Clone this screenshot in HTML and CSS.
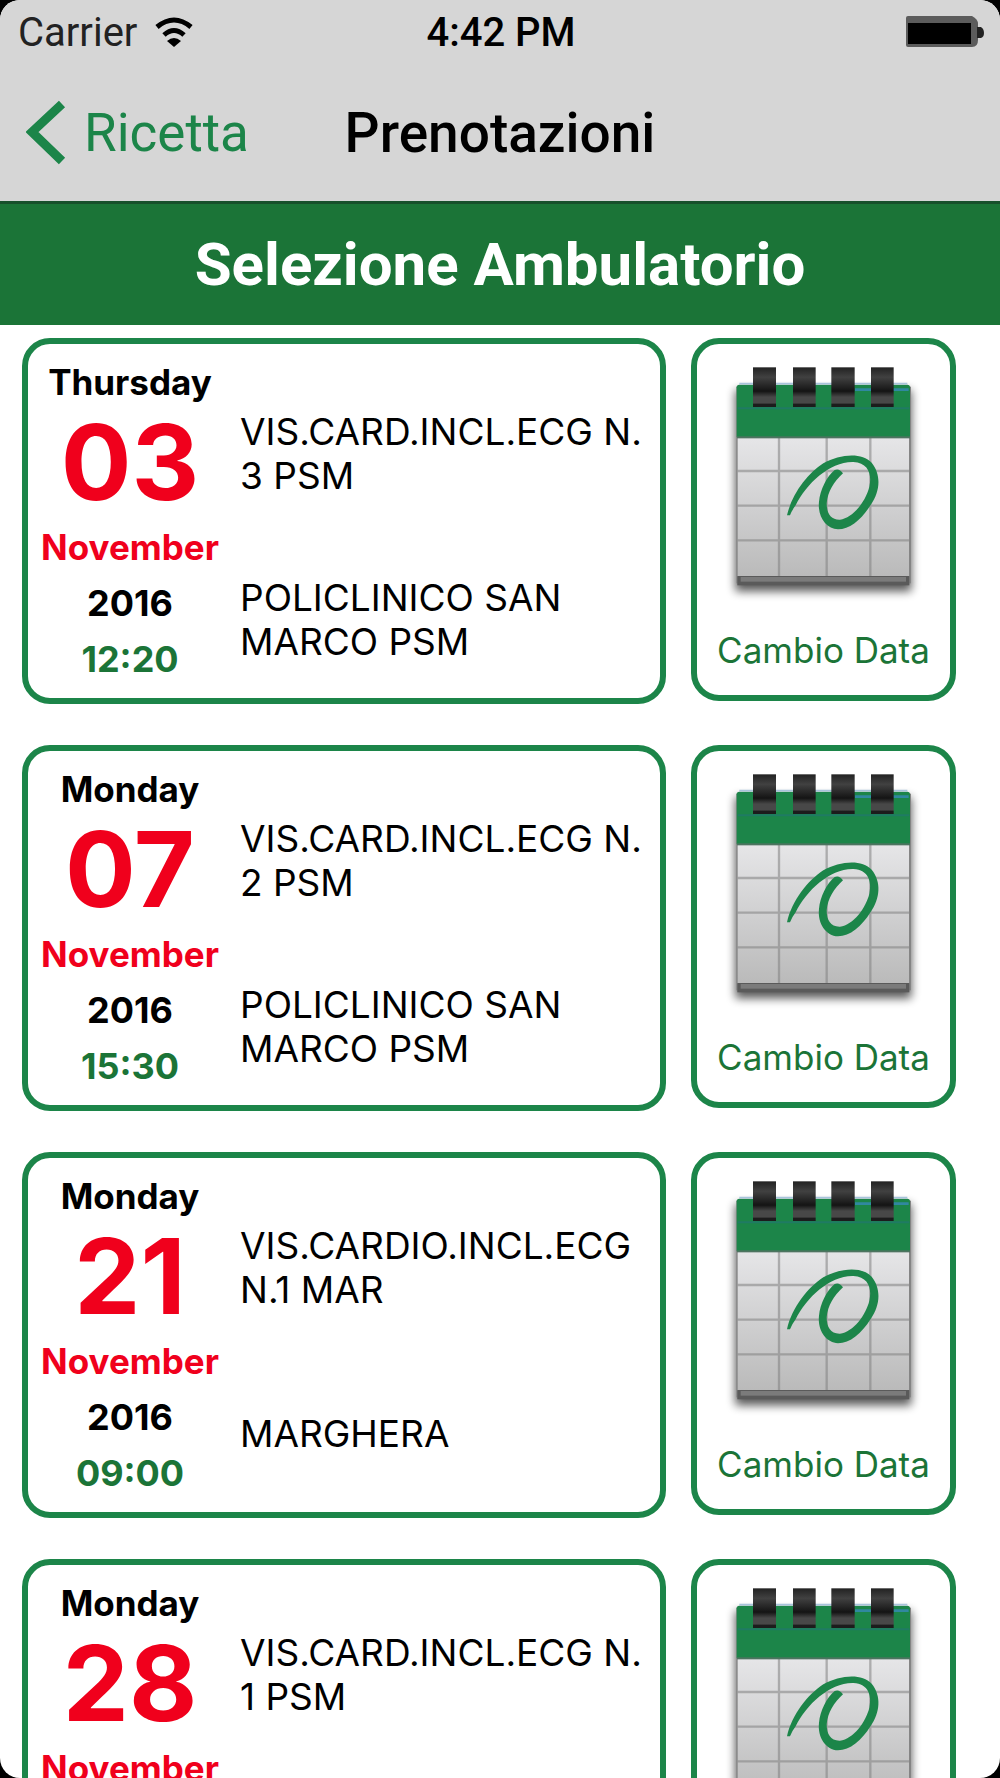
FILE: index.html
```html
<!DOCTYPE html>
<html lang="it">
<head>
    <meta charset="UTF-8">
    <meta name="viewport" content="width=device-width, initial-scale=1.0">
    <title>Prenotazioni</title>
    <link rel="stylesheet" href="styles.css">
</head>
<body>
    <!-- Shared calendar icon -->
    <svg class="sprite" aria-hidden="true">
        <defs>
            <linearGradient id="paper" x1="0" y1="0" x2="0" y2="1">
                <stop offset="0" stop-color="#e6e6e8"/>
                <stop offset="1" stop-color="#bababa"/>
            </linearGradient>
            <linearGradient id="ring" x1="0" y1="0" x2="0" y2="1">
                <stop offset="0" stop-color="#222222"/>
                <stop offset="0.25" stop-color="#414141"/>
                <stop offset="0.6" stop-color="#141414"/>
                <stop offset="0.75" stop-color="#484848"/>
                <stop offset="0.9" stop-color="#484848"/>
                <stop offset="0.93" stop-color="#1c1c1c"/>
                <stop offset="1" stop-color="#1c1c1c"/>
            </linearGradient>
            <filter id="shadow" x="-20%" y="-20%" width="140%" height="140%">
                <feGaussianBlur stdDeviation="14"/>
            </filter>
        </defs>
        <symbol id="calendar" viewBox="132 126 600 735">
            <rect x="166" y="210" width="528" height="604" fill="#000000" opacity="0.65" filter="url(#shadow)"/>
            <rect x="169" y="200" width="524" height="590" fill="#858585"/>
            <rect x="173" y="350" width="514" height="420" fill="url(#paper)"/>
            <path d="M297 350v420M440 350v420M571 350v420M173 453h514M173 557h514M173 661h514" stroke="#808080" stroke-opacity="0.55" stroke-width="7" fill="none"/>
            <path d="M170 352V202q0-8 8-8H682q8 0 8 8V352z" fill="#1c8549"/>
            <path d="M178 191H682" stroke="#a9c3dc" stroke-width="5"/>
            <path d="M525 209H686" stroke="#3088a0" stroke-width="8"/>
            <path d="M173 265H688" stroke="#1f7b63" stroke-width="6"/>
            <rect x="171" y="349" width="519" height="6" fill="#4d7460"/>
            <rect x="172" y="768" width="516" height="28" fill="#5a5a5a"/>
            <rect x="182" y="771" width="496" height="14" fill="#7b7b7b"/>
            <rect x="219" y="142" width="69" height="119" fill="url(#ring)"/>
            <rect x="339" y="142" width="68" height="119" fill="url(#ring)"/>
            <rect x="454" y="142" width="70" height="119" fill="url(#ring)"/>
            <rect x="573" y="142" width="68" height="119" fill="url(#ring)"/>
            <path d="M321 586C336 520 384 460 430 430C480 402 545 396 575 428C605 465 600 515 572 555C545 598 510 628 474 628C438 626 412 590 417 545C420 510 440 470 464 450Q478 444 489 460C462 485 443 515 440 550C440 580 452 600 480 599C520 594 558 542 568 500C576 465 566 428 520 426C450 424 380 490 347 556Q335 572 330 586z" fill="#1c8549"/>
        </symbol>
    </svg>

    <div class="screen">
        <header class="top-bar">
            <div class="status-bar">
                <div class="carrier">
                    <span>Carrier</span>
                    <svg class="wifi-icon" viewBox="0 0 38 30" aria-hidden="true">
                        <path d="M2 10Q19 -4 36 10M9 18Q19 9 29 18" fill="none" stroke="#000000" stroke-width="5"/>
                        <path d="M12 24Q19 18 26 24L19 30z" fill="#000000"/>
                    </svg>
                </div>
                <div class="clock">4:42 PM</div>
                <svg class="battery-icon" viewBox="0 0 78 32" aria-hidden="true">
                    <path d="M0 2Q0 0 2 0H66Q72 3 72 8V24Q72 31 66 31H2Q0 31 0 29z" fill="#5c5c5c"/>
                    <rect x="2" y="7" width="63" height="21" fill="#000000"/>
                    <path d="M71 11h4q3 2 3 6t-3 5h-4z" fill="#222222"/>
                </svg>
            </div>
            <nav class="nav-bar">
                <a href="#" class="back-link">
                    <svg class="back-icon" viewBox="0 0 42 66" aria-hidden="true">
                        <path d="M36 4L6 32L36 61" fill="none" stroke="#1c8549" stroke-width="9"/>
                    </svg>
                    <span>Ricetta</span>
                </a>
                <h1 class="nav-title">Prenotazioni</h1>
            </nav>
        </header>

        <h2 class="banner">Selezione Ambulatorio</h2>

        <main class="booking-list">
            <div class="booking-row">
                <article class="booking-card">
                    <div class="booking-date">
                        <div class="weekday">Thursday</div>
                        <div class="day">03</div>
                        <div class="month">November</div>
                        <div class="year">2016</div>
                        <div class="time">12:20</div>
                    </div>
                    <div class="booking-info">
                        <div class="exam">VIS.CARD.INCL.ECG N.<br>3 PSM</div>
                        <div class="place">POLICLINICO SAN MARCO PSM</div>
                    </div>
                </article>
                <button type="button" class="change-button">
                    <svg class="calendar-icon" aria-hidden="true"><use href="#calendar"/></svg>
                    <span>Cambio Data</span>
                </button>
            </div>

            <div class="booking-row">
                <article class="booking-card">
                    <div class="booking-date">
                        <div class="weekday">Monday</div>
                        <div class="day">07</div>
                        <div class="month">November</div>
                        <div class="year">2016</div>
                        <div class="time">15:30</div>
                    </div>
                    <div class="booking-info">
                        <div class="exam">VIS.CARD.INCL.ECG N.<br>2 PSM</div>
                        <div class="place">POLICLINICO SAN MARCO PSM</div>
                    </div>
                </article>
                <button type="button" class="change-button">
                    <svg class="calendar-icon" aria-hidden="true"><use href="#calendar"/></svg>
                    <span>Cambio Data</span>
                </button>
            </div>

            <div class="booking-row">
                <article class="booking-card">
                    <div class="booking-date">
                        <div class="weekday">Monday</div>
                        <div class="day">21</div>
                        <div class="month">November</div>
                        <div class="year">2016</div>
                        <div class="time">09:00</div>
                    </div>
                    <div class="booking-info">
                        <div class="exam">VIS.CARDIO.INCL.ECG<br>N.1 MAR</div>
                        <div class="place">MARGHERA</div>
                    </div>
                </article>
                <button type="button" class="change-button">
                    <svg class="calendar-icon" aria-hidden="true"><use href="#calendar"/></svg>
                    <span>Cambio Data</span>
                </button>
            </div>

            <div class="booking-row">
                <article class="booking-card">
                    <div class="booking-date">
                        <div class="weekday">Monday</div>
                        <div class="day">28</div>
                        <div class="month">November</div>
                    </div>
                    <div class="booking-info">
                        <div class="exam">VIS.CARD.INCL.ECG N.<br>1 PSM</div>
                    </div>
                </article>
                <button type="button" class="change-button" aria-label="Cambio Data">
                    <svg class="calendar-icon" aria-hidden="true"><use href="#calendar"/></svg>
                </button>
            </div>
        </main>
    </div>
</body>
</html>
```

FILE: styles.css
```css
* {
    box-sizing: border-box;
}

body {
    margin: 0;
    background: #000000;
    font-family: Inter, Roboto, sans-serif;
    color: #000000;
}

.sprite {
    position: absolute;
    width: 0;
    height: 0;
}

.screen {
    display: flex;
    flex-direction: column;
    height: 100vh;
    overflow: hidden;
    background: white;
    border-radius: 20px;
}

/* Status bar and navigation */
.top-bar {
    flex: none;
    background: #d6d6d6;
    border-bottom: 3px solid #17502b;
    font-family: Roboto, sans-serif;
}

.status-bar {
    display: grid;
    grid-template-columns: 1fr auto 1fr;
    align-items: center;
    height: 64px;
    padding: 0 16px 0 18px;
    font-size: 40px;
}

.carrier {
    display: flex;
    align-items: center;
    gap: 18px;
    color: #222222;
}

.wifi-icon {
    width: 38px;
    height: 30px;
}

.clock {
    font-weight: 500;
}

.battery-icon {
    width: 78px;
    height: 32px;
    justify-self: end;
}

.nav-bar {
    display: grid;
    grid-template-columns: 1fr auto 1fr;
    align-items: center;
    height: 137px;
    padding: 0 26px;
    font-size: 53px;
}

.back-link {
    display: flex;
    align-items: center;
    gap: 16px;
    color: #1c8549;
    text-decoration: none;
}

.back-icon {
    width: 42px;
    height: 66px;
}

.nav-title {
    margin: 0;
    font-size: 55px;
    font-weight: 500;
}

.banner {
    flex: none;
    margin: 0;
    background: #1b7437;
    color: white;
    font-family: Roboto, sans-serif;
    font-size: 60px;
    font-weight: bold;
    line-height: 121px;
    text-align: center;
}

/* Bookings */
.booking-list {
    flex: 1;
    display: flex;
    flex-direction: column;
    gap: 41px;
    min-height: 0;
    padding: 13px 44px 0 22px;
    overflow: hidden;
}

.booking-row {
    display: grid;
    grid-template-columns: 644fr 265fr;
    gap: 25px;
    align-items: start;
}

.booking-card,
.change-button {
    border: 6px solid #1c8549;
    border-radius: 28px;
    background: white;
}

.booking-card {
    display: flex;
    min-height: 366px;
    padding: 10px 8px 11px 12px;
}

.booking-date {
    flex: none;
    width: 180px;
    font-size: 35px;
    font-weight: bold;
    line-height: 56px;
    text-align: center;
}

.day {
    margin-bottom: 5px;
    font-size: 105px;
    line-height: 104px;
    color: #f0001c;
}

.month {
    color: #f0001c;
}

.year,
.time {
    font-size: 36px;
}

.time {
    color: #1b7437;
}

.booking-info {
    flex: 1;
    min-width: 0;
    padding: 56px 0 0 20px;
    font-size: 37px;
    line-height: 44px;
}

.exam {
    min-height: 166px;
}

.place {
    display: flex;
    align-items: center;
    min-height: 88px;
}

.change-button {
    display: flex;
    flex-direction: column;
    align-items: center;
    gap: 19px;
    min-height: 363px;
    padding: 18px 0 0;
    color: #1b7437;
    font-family: inherit;
    font-size: 35px;
    line-height: 48px;
}

.calendar-icon {
    width: 200px;
    height: 245px;
}
```
